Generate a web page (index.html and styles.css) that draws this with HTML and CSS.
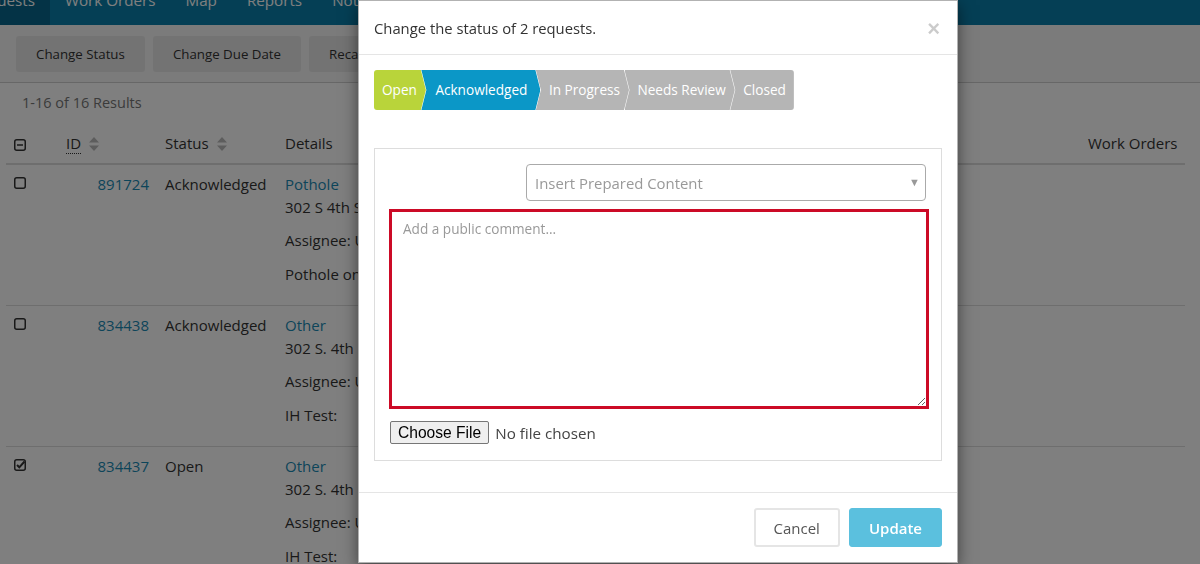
FILE: index.html
```html
<!DOCTYPE html>
<html lang="en">
<head>
<meta charset="utf-8">
<title>Requests</title>
<link rel="stylesheet" href="styles.css">
</head>
<body>
<div class="page">
  <nav class="topnav">
    <a class="navitem active">Requests</a>
    <a class="navitem">Work Orders</a>
    <a class="navitem">Map</a>
    <a class="navitem">Reports</a>
    <a class="navitem">Notifications</a>
  </nav>
  <div class="toolbar">
    <button class="tbtn">Change Status</button>
    <button class="tbtn">Change Due Date</button>
    <button class="tbtn">Recategorize</button>
  </div>
  <div class="results">1-16 of 16 Results</div>
  <div class="tablewrap">
    <table class="grid">
      <colgroup>
        <col class="c-check"><col class="c-id"><col class="c-status"><col class="c-details"><col class="c-wo">
      </colgroup>
      <thead>
        <tr>
          <th class="chk">
            <svg class="cb cb-head" viewBox="0 0 12 12"><rect x="0.75" y="0.75" width="10.5" height="10.5" rx="2" fill="none" stroke="currentColor" stroke-width="1.5"/><line x1="3" y1="6" x2="9" y2="6" stroke="currentColor" stroke-width="1.5"/></svg>
          </th>
          <th><span class="abbr">ID</span><svg class="sort" viewBox="0 0 12 16"><path d="M6 1 L11 6.5 H1 Z M6 15 L11 9.5 H1 Z" fill="currentColor"/></svg></th>
          <th>Status<svg class="sort" viewBox="0 0 12 16"><path d="M6 1 L11 6.5 H1 Z M6 15 L11 9.5 H1 Z" fill="currentColor"/></svg></th>
          <th>Details</th>
          <th>Work Orders</th>
        </tr>
      </thead>
      <tbody>
        <tr>
          <td class="chk"><svg class="cb" viewBox="0 0 12 12"><rect x="0.75" y="0.75" width="10.5" height="10.5" rx="2" fill="none" stroke="currentColor" stroke-width="1.5"/></svg></td>
          <td class="idc"><a>891724</a></td>
          <td>Acknowledged</td>
          <td><a>Pothole</a><div class="addr">302 S 4th St</div><p>Assignee: Unassigned</p><p>Pothole on street</p></td>
          <td></td>
        </tr>
        <tr>
          <td class="chk"><svg class="cb" viewBox="0 0 12 12"><rect x="0.75" y="0.75" width="10.5" height="10.5" rx="2" fill="none" stroke="currentColor" stroke-width="1.5"/></svg></td>
          <td class="idc"><a>834438</a></td>
          <td>Acknowledged</td>
          <td><a>Other</a><div class="addr">302 S. 4th St</div><p>Assignee: Unassigned</p><p>IH Test:</p></td>
          <td></td>
        </tr>
        <tr>
          <td class="chk"><svg class="cb" viewBox="0 0 12 12"><rect x="0.75" y="0.75" width="10.5" height="10.5" rx="2" fill="none" stroke="currentColor" stroke-width="1.5"/><path d="M3 6 L5.3 8.3 L10.5 2.5" fill="none" stroke="currentColor" stroke-width="2"/></svg></td>
          <td class="idc"><a>834437</a></td>
          <td>Open</td>
          <td><a>Other</a><div class="addr">302 S. 4th St</div><p>Assignee: Unassigned</p><p>IH Test:</p></td>
          <td></td>
        </tr>
      </tbody>
    </table>
  </div>
</div>

<div class="backdrop"></div>

<div class="modal">
  <div class="mheader">
    <h4 class="mtitle">Change the status of 2 requests.</h4>
    <span class="close">×</span>
  </div>
  <div class="mbody">
    <div class="steps">
      <div class="step s-open">Open</div>
      <div class="step s-ack">Acknowledged</div>
      <div class="step s-gray">In Progress</div>
      <div class="step s-gray">Needs Review</div>
      <div class="step s-gray s-last">Closed</div>
    </div>
    <div class="panel">
      <div class="selrow">
        <div class="select"><span>Insert Prepared Content</span><span class="arrow">▼</span></div>
      </div>
      <textarea class="comment" placeholder="Add a public comment..."></textarea>
      <div class="fileinput"><span class="filebtn">Choose File</span><span class="nofile">No file chosen</span></div>
    </div>
  </div>
  <div class="mfooter">
    <button class="btn btn-cancel">Cancel</button>
    <button class="btn btn-update">Update</button>
  </div>
</div>
</body>
</html>
```
FILE: styles.css
```css
* { box-sizing: border-box; }
html, body { margin: 0; padding: 0; }
body {
  font-family: "Open Sans", "Noto Sans", sans-serif;
  color: #333;
  background: #fff;
  overflow: hidden;
  width: 1200px;
  height: 564px;
}
.page { margin-top: -25px; }

.topnav {
  height: 50px;
  background: #0b7eaa;
  display: flex;
  overflow: hidden;
}
.navitem {
  color: #fff;
  font-size: 15.2px;
  line-height: 50px;
  padding: 0 15px;
  white-space: nowrap;
}
.navitem.active { background: #08678c; margin-left: -45px; }

.toolbar {
  background: #f6f6f6;
  border-bottom: 1px solid #cfcfcf;
  height: 58px;
  display: flex;
  align-items: center;
  gap: 8px;
  padding-left: 16px;
}
.tbtn {
  font-family: inherit;
  font-size: 13.3px;
  color: #333;
  background: #e7e7e7;
  border: 0;
  border-radius: 3px;
  height: 36px;
  padding: 0 20px;
  line-height: 34px;
}

.results {
  color: #777;
  font-size: 14.5px;
  line-height: 20px;
  padding: 10px 0 10px 22px;
}

.tablewrap { padding: 0 15px 0 6px; }
.grid {
  width: 1179px;
  border-collapse: collapse;
  table-layout: fixed;
  font-size: 15px;
}
.c-check { width: 52px; }
.c-id { width: 99px; }
.c-status { width: 120px; }
.c-wo { width: 105px; }
.grid th {
  text-align: left;
  font-weight: 400;
  padding: 8px 8px 8px;
  line-height: 24px;
  border-bottom: 2px solid #ddd;
  white-space: nowrap;
}
.grid td {
  vertical-align: top;
  padding: 7px 8px 9px;
  line-height: 24px;
  border-bottom: 1px solid #ddd;
  white-space: nowrap;
}
.grid td p { margin: 10px 0; line-height: 24px; }
.grid td .addr { line-height: 22px; }
.grid a { color: #1a8ab4; }
.idc { text-align: right; }
.chk { color: #333; }
.cb { width: 12px; height: 12px; display: block; margin-top: 5px; }
.cb-head { margin-top: 4px; }
.abbr { border-bottom: 1px dotted #333; }
.sort { width: 12px; height: 16px; color: #bbb; vertical-align: -3px; margin-left: 7px; }

.backdrop {
  position: fixed;
  inset: 0;
  background: rgba(0, 0, 0, 0.5);
}

.modal {
  position: absolute;
  left: 358px;
  top: 0;
  width: 600px;
  height: 563px;
  background: #fff;
  border: 1px solid rgba(0, 0, 0, 0.3);
  box-shadow: 0 5px 15px rgba(0, 0, 0, 0.5);
  display: flex;
  flex-direction: column;
}
.mheader {
  height: 54px;
  border-bottom: 1px solid #e5e5e5;
  padding: 0 15px;
  display: flex;
  align-items: center;
  justify-content: space-between;
}
.mtitle {
  margin: 0;
  font-size: 14.8px;
  font-weight: 400;
  color: #333;
}
.close {
  font-size: 22px;
  font-weight: 700;
  color: #000;
  opacity: 0.2;
  font-family: "Liberation Sans", Arial, sans-serif;
  margin-right: 2px;
  margin-top: 2px;
}
.mbody {
  padding: 15px;
  flex: 1;
}
.steps {
  display: flex;
  height: 40px;
}
.step {
  color: #fff;
  font-size: 13.6px;
  line-height: 40px;
  padding: 0 10px 0 14px;
  margin-left: -4.5px;
  clip-path: polygon(0 0, calc(100% - 5px) 0, 100% 50%, calc(100% - 5px) 100%, 0 100%, 5px 50%);
  white-space: nowrap;
}
.s-open {
  background: #b9d43a;
  margin-left: 0;
  padding-left: 8px;
  padding-right: 9px;
  border-radius: 3px 0 0 3px;
  clip-path: polygon(0 0, calc(100% - 5px) 0, 100% 50%, calc(100% - 5px) 100%, 0 100%);
}
.s-ack { background: #0b97c7; padding-right: 13px; }
.s-gray { background: #b5b5b5; padding: 0 9px 0 13px; }
.s-last {
  clip-path: polygon(0 0, 100% 0, 100% 100%, 0 100%, 5px 50%);
  border-radius: 0 3px 3px 0;
  padding-right: 8px;
}

.panel {
  margin-top: 38px;
  border: 1px solid #ddd;
  padding: 15px;
  padding-bottom: 16px;
}
.selrow { display: flex; justify-content: flex-end; }
.select {
  width: 400px;
  height: 37px;
  border: 1px solid #aaa;
  border-radius: 4px;
  display: flex;
  align-items: center;
  justify-content: space-between;
  padding: 0 5px 0 8px;
  color: #999;
  font-size: 14.9px;
}
.arrow { font-size: 11px; color: #999; margin-top: -2px; }
.comment {
  display: block;
  width: 540px;
  height: 200px;
  margin: 8px 0 0 -1px;
  border: 3px solid #cc0a26;
  padding: 7px 11px;
  font-family: inherit;
  font-size: 13.6px;
  resize: vertical;
  outline: none;
}
.comment::placeholder { color: #999; }
.fileinput {
  margin-top: 12px;
  display: flex;
  align-items: center;
  font-size: 15.2px;
}
.filebtn {
  font-family: "Liberation Sans", Arial, sans-serif;
  font-size: 15.6px;
  color: #000;
  background: #efefef;
  border: 1px solid #767676;
  border-radius: 2px;
  height: 23px;
  line-height: 21px;
  padding: 0 7px;
}
.nofile { color: #444; margin-left: 6px; }

.mfooter {
  border-top: 1px solid #e5e5e5;
  padding: 15px;
  display: flex;
  justify-content: flex-end;
  gap: 9px;
  height: 70px;
}
.btn {
  font-family: inherit;
  font-size: 15px;
  height: 39px;
  border-radius: 3px;
  padding: 0 19px;
}
.btn-cancel { background: #fff; color: #555; border: 2px solid #e5e5e5; padding: 0 18px; }
.btn-update { background: #5bc0de; color: #fff; border: 1px solid #5bc0de; font-weight: 600; }
```
